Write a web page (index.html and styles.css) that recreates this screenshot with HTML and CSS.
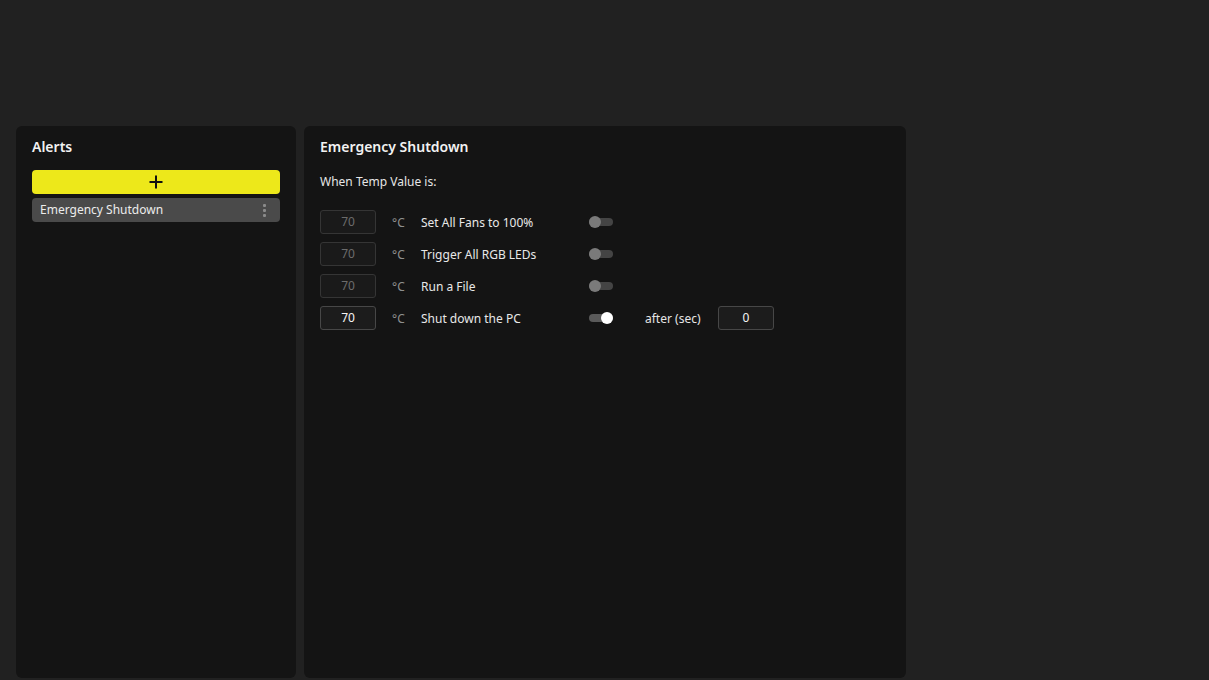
FILE: index.html
```html
<!DOCTYPE html>
<html>
<head>
<meta charset="utf-8">
<link rel="stylesheet" href="styles.css">
</head>
<body>
<div class="layout">
  <section class="panel panel-alerts">
    <h2 class="panel-title">Alerts</h2>
    <button class="add-btn" type="button">
      <svg width="14" height="14" viewBox="0 0 14 14"><path d="M7 0.5V13.5M0.5 7H13.5" stroke="#111" stroke-width="2" fill="none"/></svg>
    </button>
    <div class="alert-item">
      <span>Emergency Shutdown</span>
      <span class="kebab"><i></i><i></i><i></i></span>
    </div>
  </section>
  <section class="panel panel-detail">
    <h2 class="panel-title">Emergency Shutdown</h2>
    <p class="subtitle">When Temp Value is:</p>
    <div class="rows">
      <div class="row">
        <div class="num disabled">70</div>
        <span class="unit">°C</span>
        <span class="label">Set All Fans to 100%</span>
        <span class="toggle"><span class="knob"></span></span>
      </div>
      <div class="row">
        <div class="num disabled">70</div>
        <span class="unit">°C</span>
        <span class="label">Trigger All RGB LEDs</span>
        <span class="toggle"><span class="knob"></span></span>
      </div>
      <div class="row">
        <div class="num disabled">70</div>
        <span class="unit">°C</span>
        <span class="label">Run a File</span>
        <span class="toggle"><span class="knob"></span></span>
      </div>
      <div class="row">
        <div class="num">70</div>
        <span class="unit">°C</span>
        <span class="label">Shut down the PC</span>
        <span class="toggle on"><span class="knob"></span></span>
        <span class="after">after (sec)</span>
        <div class="num small">0</div>
      </div>
    </div>
  </section>
</div>
</body>
</html>
```
FILE: styles.css
```css
* { box-sizing: border-box; }
html, body { margin: 0; padding: 0; }
body {
  background: #212121;
  font-family: "Noto Sans", "Open Sans", sans-serif;
  color: #e6e6e6;
  font-size: 12px;
  height: 680px;
  overflow: hidden;
}
.layout {
  display: flex;
  gap: 8px;
  padding: 126px 0 0 16px;
}
.panel {
  background: #141414;
  border-radius: 6px;
  height: 552px;
  padding: 11px 16px;
  display: flex;
  flex-direction: column;
}
.panel-alerts { width: 280px; }
.panel-detail { width: 602px; }
.panel-title {
  margin: 0;
  font-size: 14px;
  font-weight: 600;
  line-height: 20px;
  color: #f2f2f2;
}
.add-btn {
  margin-top: 13px;
  height: 24px;
  border: 0;
  border-radius: 4px;
  background: #ede81a;
  display: flex;
  align-items: center;
  justify-content: center;
  padding: 0;
}
.alert-item {
  margin-top: 4px;
  height: 24px;
  border-radius: 4px;
  background: #4a4a4a;
  display: flex;
  align-items: center;
  justify-content: space-between;
  padding: 0 14px 0 8px;
  line-height: 24px;
  color: #ececec;
}
.kebab {
  display: flex;
  flex-direction: column;
  gap: 2px;
}
.kebab i {
  width: 3px;
  height: 3px;
  background: #8a8a8a;
  border-radius: 1px;
  display: block;
}
.subtitle {
  margin: 15px 0 0;
  line-height: 20px;
  color: #e6e6e6;
}
.rows {
  margin-top: 18px;
  display: flex;
  flex-direction: column;
  gap: 8px;
}
.row {
  display: flex;
  align-items: center;
  height: 24px;
}
.num {
  width: 56px;
  height: 24px;
  border: 1px solid #474747;
  border-radius: 3px;
  background: #1c1c1c;
  color: #f4f4f4;
  text-align: center;
  line-height: 22px;
}
.num.disabled {
  border-color: #353535;
  background: #1a1a1a;
  color: #6c6c6c;
}
.unit {
  margin-left: 16px;
  width: 29px;
  color: #8f8f8f;
}
.label {
  width: 168px;
  color: #e8e8e8;
}
.toggle {
  position: relative;
  width: 24px;
  height: 8px;
  border-radius: 4px;
  background: #444;
}
.toggle .knob {
  position: absolute;
  left: 0;
  top: -2px;
  width: 12px;
  height: 12px;
  border-radius: 50%;
  background: #7a7a7a;
}
.toggle.on { background: #5a5a5a; }
.toggle.on .knob {
  left: 12px;
  background: #ffffff;
}
.after {
  margin-left: 32px;
  width: 73px;
  color: #e6e6e6;
}
```
